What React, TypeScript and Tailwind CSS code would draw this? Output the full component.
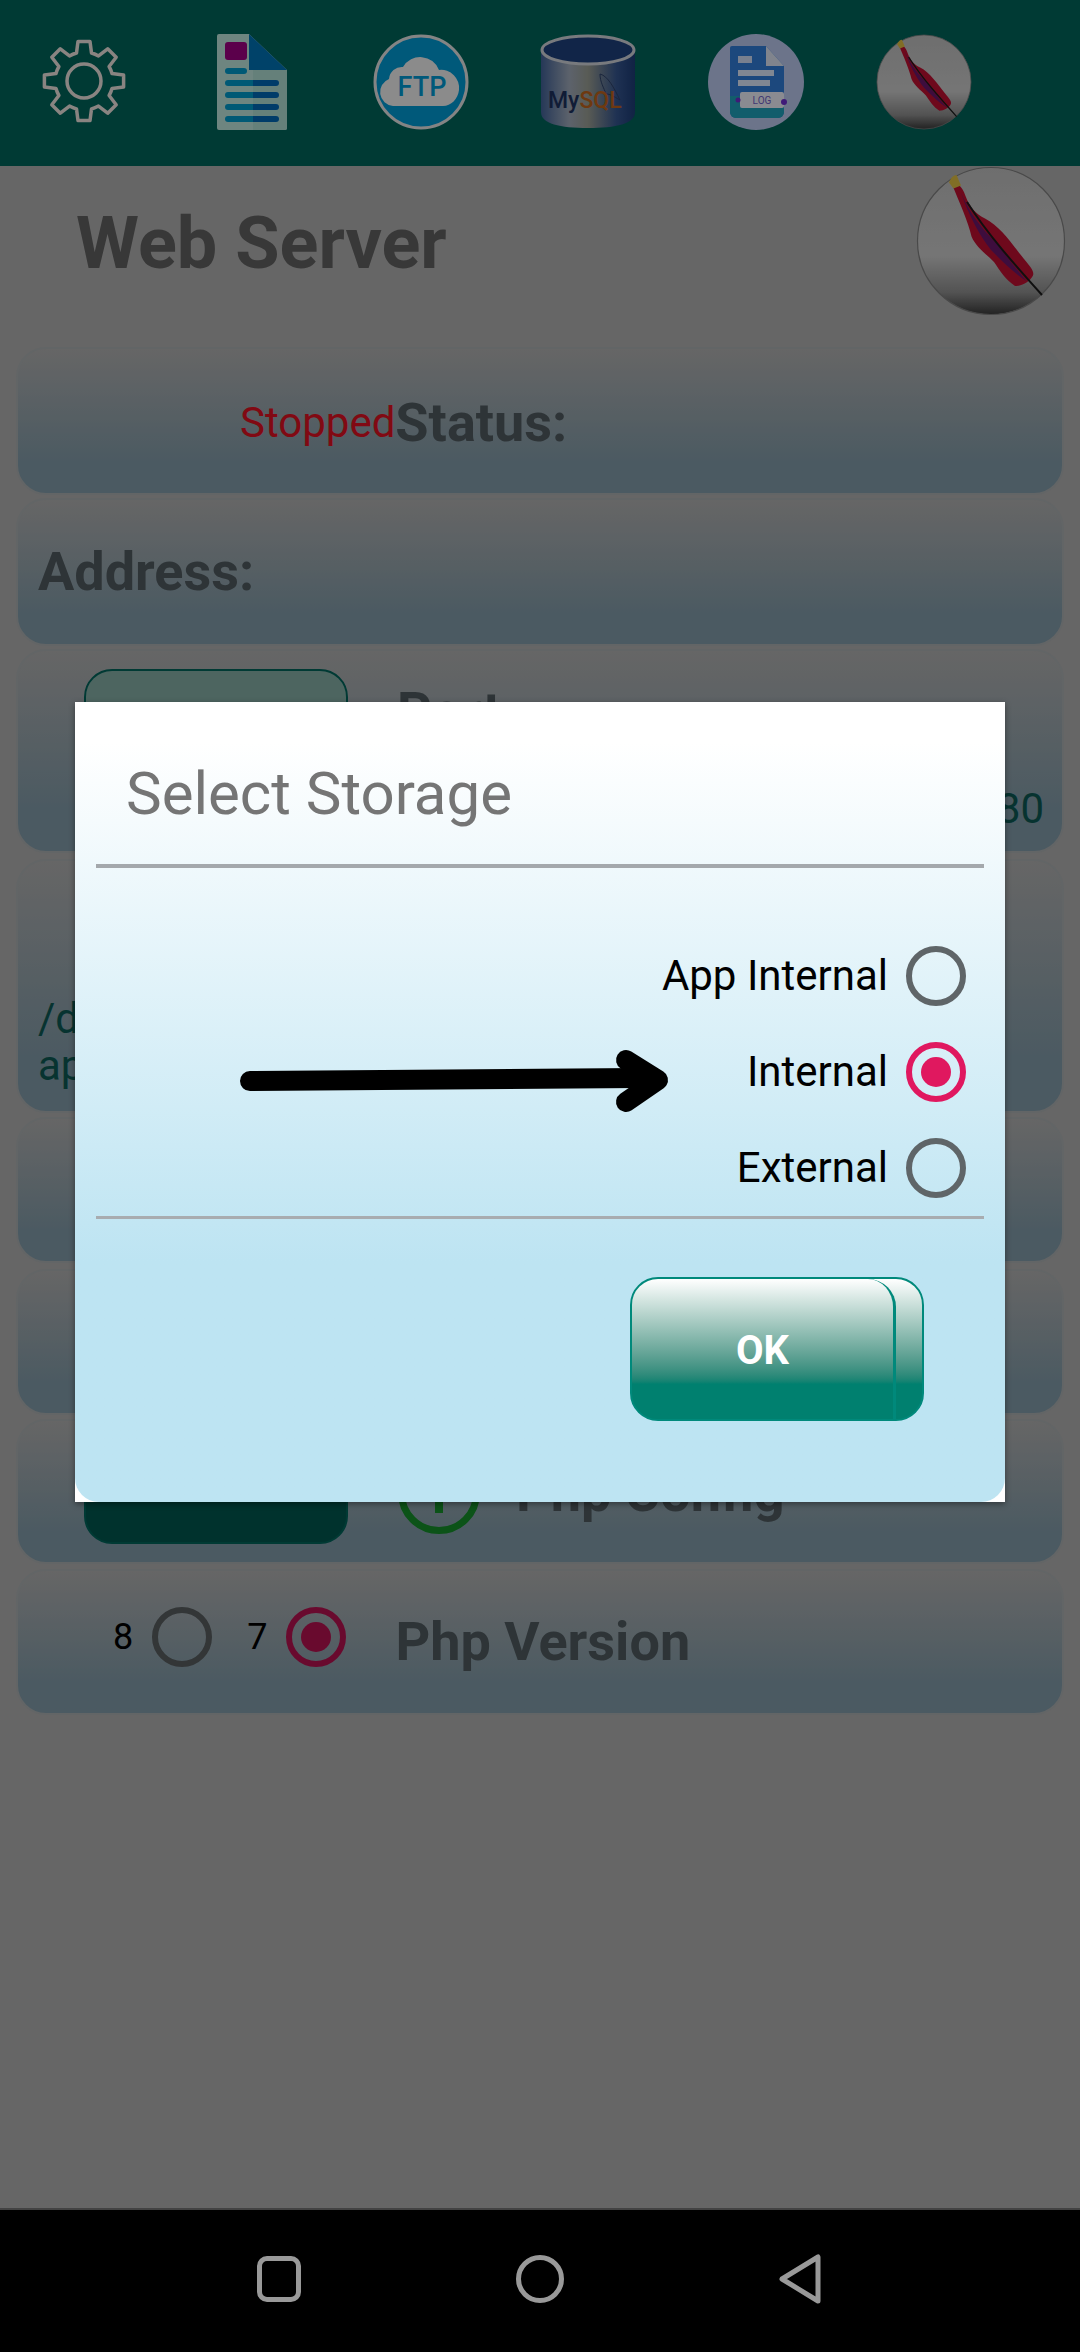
import { useId } from 'react'

// 8 tooth gear outline, centred on 0,0
const gearPath = (() => {
  const teeth = 8
  const tip = 40
  const root = 29
  const pt = (r: number, a: number) => `${(r * Math.cos(a)).toFixed(1)} ${(r * Math.sin(a)).toFixed(1)}`
  let d = ''
  for (let i = 0; i < teeth; i++) {
    const a = (i * 2 * Math.PI) / teeth - Math.PI / 2
    d += `${i === 0 ? 'M' : 'A' + root + ' ' + root + ' 0 0 1'} ${pt(root, a - 0.26)} `
    d += `L${pt(tip, a - 0.15)} L${pt(tip, a + 0.15)} L${pt(root, a + 0.26)} `
  }
  return d + `A${root} ${root} 0 0 1 ${pt(root, -Math.PI / 2 - 0.26)}Z`
})()

function GearIcon() {
  return (
    <svg width="90" height="90" viewBox="-45 -45 90 90" fill="none" stroke="#e4dcd8" strokeWidth="3.5" strokeLinejoin="round">
      <path d={gearPath} />
      <circle r="17" />
    </svg>
  )
}

function DocIcon() {
  return (
    <svg width="70" height="96" viewBox="0 0 70 96">
      <path d="M2 0H32L70 36V94a2 2 0 0 1-2 2H2a2 2 0 0 1-2-2V2a2 2 0 0 1 2-2Z" fill="#b8ded6" />
      <path d="M36 36H70V94a2 2 0 0 1-2 2H36Z" fill="#a8d6cc" />
      <path d="M32 0L70 36H32Z" fill="#006fb0" />
      <rect x="8" y="8" width="22" height="18" rx="3" fill="#98007e" />
      <rect x="8" y="34" width="22" height="6" rx="3" fill="#0094c4" />
      {[46, 58, 70, 82].map((y) => (
        <g key={y}>
          <path d={`M11 ${y}H36V${y + 6}H11a3 3 0 0 1 0-6Z`} fill="#0094c4" />
          <path d={`M36 ${y}H59a3 3 0 0 1 0 6H36Z`} fill="#0064b0" />
        </g>
      ))}
    </svg>
  )
}

function FtpIcon() {
  return (
    <svg width="96" height="96" viewBox="0 0 96 96">
      <circle cx="48" cy="48" r="46" fill="#0094cc" stroke="#dcdcdc" strokeWidth="3" />
      <path
        d="M20 72a14 14 0 0 1-4-27 13 13 0 0 1 14-12 20 20 0 0 1 36 3 18 18 0 0 1 20 20c-1 9-8 16-16 16Z"
        fill="#e8e8e8"
      />
      <text x="49" y="62" textAnchor="middle" fontFamily="Roboto, sans-serif" fontSize="27" fontWeight="500" fill="#0094cc">
        FTP
      </text>
    </svg>
  )
}

function MysqlIcon() {
  const id = useId()
  return (
    <svg width="96" height="96" viewBox="0 0 96 96">
      <defs>
        <linearGradient id={id} x1="0" x2="1" y1="0" y2="0">
          <stop offset="0" stopColor="#3f5e92" />
          <stop offset="0.3" stopColor="#9aa4b4" />
          <stop offset="0.5" stopColor="#94988e" />
          <stop offset="0.8" stopColor="#34538a" />
          <stop offset="1" stopColor="#1c3a72" />
        </linearGradient>
      </defs>
      <path d="M1 16V78C1 90 20 94 48 94S95 90 95 78V16Z" fill={`url(#${id})`} />
      <ellipse cx="48" cy="16" rx="46" ry="14" fill="#1d3f78" stroke="#c8ccd2" strokeWidth="3" />
      <path d="M60 40c8 2 14 14 20 26-7-4-10-6-14-6-2-6-6-12-6-20Z" fill="none" stroke="#2c3f66" strokeWidth="1" />
      <text x="8" y="74" fontFamily="Roboto, sans-serif" fontSize="23" fontWeight="500" fill="#1c2f5a">
        My<tspan fill="#b8601c">SQL</tspan>
      </text>
    </svg>
  )
}

function LogIcon() {
  return (
    <svg width="96" height="96" viewBox="0 0 96 96">
      <circle cx="48" cy="48" r="48" fill="#b4c2e6" />
      <path d="M24 12H58L76 32V78a6 6 0 0 1-6 6H28a6 6 0 0 1-6-6V14a2 2 0 0 1 2-2Z" fill="#2f78d0" />
      <path d="M22 62H76V78a6 6 0 0 1-6 6H28a6 6 0 0 1-6-6Z" fill="#1f9bb4" />
      <path d="M58 12L76 32H58Z" fill="#d6dcec" />
      <rect x="30" y="22" width="14" height="7" fill="#c8d6ee" />
      <rect x="30" y="36" width="36" height="6" fill="#d8e2f4" />
      <rect x="30" y="46" width="32" height="6" fill="#d8e2f4" />
      <rect x="32" y="58" width="44" height="16" rx="2" fill="#e6e8f2" />
      <circle cx="30" cy="66" r="2.5" fill="#6a2cc8" />
      <circle cx="76" cy="68" r="3" fill="#6a2cc8" />
      <text x="54" y="70" textAnchor="middle" fontFamily="Roboto, sans-serif" fontSize="10" fill="#6a5cc0">
        LOG
      </text>
    </svg>
  )
}

function ApacheIcon({ size }: { size: number }) {
  const id = useId()
  return (
    <svg width={size} height={size} viewBox="0 0 100 100">
      <defs>
        <linearGradient id={id} x1="0" x2="0" y1="0" y2="1">
          <stop offset="0" stopColor="#b8b8b8" />
          <stop offset="0.6" stopColor="#c4c4c4" />
          <stop offset="0.85" stopColor="#8a8a8a" />
          <stop offset="1" stopColor="#3a3a3a" />
        </linearGradient>
      </defs>
      <circle cx="50" cy="50" r="49" fill={`url(#${id})`} stroke="#7a7a7a" strokeWidth="0.8" />
      <path d="M23 10C28 11 31 14 33 20C36 28 40 32 46 35C56 40 64 52 72 62C76 67 79 70 78 73C76 77 71 80 66 80C60 76 56 70 52 64C46 58 40 54 37 47C35 38 29 24 23 10Z" fill="#b81030" />
      <path d="M22 11C23 8 25 6 27 6L30 13 25 15Z" fill="#d8b840" />
      <path d="M30 18C36 32 44 42 54 52C60 60 68 70 74 77C66 72 58 64 50 56C42 46 35 32 30 18Z" fill="#4c1a78" opacity="0.75" />
      <path d="M34 24C48 46 66 66 84 86" fill="none" stroke="#1a1a1a" strokeWidth="1.3" />
    </svg>
  )
}

function Radio({ checked, dark }: { checked?: boolean; dark?: boolean }) {
  if (checked) {
    const color = dark ? 'border-[#b0114e]' : 'border-[#e0185f]'
    const dot = dark ? 'bg-[#b0114e]' : 'bg-[#e0185f]'
    return (
      <span className={`flex h-[60px] w-[60px] items-center justify-center rounded-full border-[6px] ${color}`}>
        <span className={`h-[30px] w-[30px] rounded-full ${dot}`} />
      </span>
    )
  }
  return <span className={`h-[60px] w-[60px] rounded-full border-[6px] ${dark ? 'border-[#555a5c]' : 'border-[#5f6568]'}`} />
}

function StorageOption({ label, checked }: { label: string; checked?: boolean }) {
  return (
    <div className="flex h-[96px] items-center justify-end gap-[18px] pr-[18px]">
      <span className="text-[42px] leading-none text-black">{label}</span>
      <Radio checked={checked} />
    </div>
  )
}

const cardClass =
  'mx-4 rounded-[30px] border-2 border-[#a4a8aa] bg-gradient-to-b from-[#aaaaaa] to-[#7d96a3] to-80%'
const labelClass = 'text-[54px] font-bold leading-none text-[#4e585d]'
const keyClass = 'w-[264px] rounded-[28px] border-2 border-[#006158]'

export default function App() {
  return (
    <div className="relative flex h-[2352px] w-[1080px] flex-col overflow-hidden bg-[#aaaaaa] font-[Roboto,sans-serif]">
      <div className="flex h-[166px] items-start bg-[#006158] pt-[34px]">
        <div className="ml-[39px] mt-[2px] w-[90px]">
          <GearIcon />
        </div>
        <div className="ml-[88px]">
          <DocIcon />
        </div>
        <div className="ml-[86px]">
          <FtpIcon />
        </div>
        <div className="ml-[71px]">
          <MysqlIcon />
        </div>
        <div className="ml-[72px]">
          <LogIcon />
        </div>
        <div className="ml-[72px]">
          <ApacheIcon size={96} />
        </div>
      </div>

      <div className="flex h-[181px] items-start justify-between pl-[76px] pr-[14px]">
        <h1 className="mt-[30px] text-[72px] font-bold leading-[96px] text-[#5e5e5e]">Web Server</h1>
        <ApacheIcon size={150} />
      </div>

      <div className={`${cardClass} flex h-[148px] items-center pl-[222px] pt-1`}>
        <span className="text-[42px] leading-none text-[#d81020]">Stopped</span>
        <span className={labelClass}>Status:</span>
      </div>

      <div className={`${cardClass} mt-[3px] flex h-[148px] items-center pl-[20px]`}>
        <span className={labelClass}>Address:</span>
      </div>

      <div className={`${cardClass} mt-[3px] flex h-[204px] justify-between pl-[66px] pr-[18px] pt-[18px]`}>
        <div className="flex items-start gap-[49px]">
          <div className={`${keyClass} h-[130px] bg-[#80a8a0]`} />
          <span className={`${labelClass} mt-[16px]`}>Port</span>
        </div>
        <span className="mt-[119px] text-[42px] leading-none text-[#0c5650]">80</span>
      </div>

      <div className={`${cardClass} mt-[6px] h-[254px] pl-[20px] pt-[134px] text-[42px] leading-[47px] text-[#0c5650]`}>
        <div>/d</div>
        <div>ap</div>
      </div>

      <div className={`${cardClass} mt-1 h-[146px]`} />
      <div className={`${cardClass} mt-[6px] h-[146px]`} />

      <div className={`${cardClass} mt-[4px] flex h-[145px] items-end gap-[50px] pb-[18px] pl-[66px]`}>
        <div className={`${keyClass} h-[120px] bg-[#00544c]`} />
        <div className="flex items-center gap-9 pb-[10px]">
          <span className="flex h-[82px] w-[82px] justify-center rounded-full border-[7px] border-[#148a28]">
            <span className="mt-[14px] h-[40px] w-[8px] bg-[#148a28]" />
          </span>
          <span className={labelClass}>Php Config</span>
        </div>
      </div>

      <div className={`${cardClass} mt-[5px] flex h-[146px] items-center pl-[95px]`}>
        <div className="flex items-center gap-[19px] pb-[10px]">
          <span className="text-[36px] leading-none text-black">8</span>
          <Radio dark />
        </div>
        <div className="ml-[35px] flex items-center gap-[19px] pb-[10px]">
          <span className="text-[36px] leading-none text-black">7</span>
          <Radio checked dark />
        </div>
        <span className={`${labelClass} ml-[49px]`}>Php Version</span>
      </div>

      <div className="mt-auto flex h-[144px] items-center border-t-2 border-[#707070] bg-black pb-[4px]">
        <span className="ml-[257px] h-[46px] w-[44px] rounded-[10px] border-[5px] border-white" />
        <span className="ml-[215px] h-[48px] w-[48px] rounded-full border-[5px] border-white" />
        <svg className="ml-[215px]" width="42" height="50" viewBox="0 0 42 50" fill="none" stroke="#ffffff" strokeWidth="5" strokeLinejoin="round">
          <path d="M39 3V47L3 25Z" />
        </svg>
      </div>

      {/* dim behind the dialog */}
      <div className="absolute inset-0 z-10 bg-black/40" />

      <div className="absolute left-[75px] top-[702px] z-20 h-[800px] w-[930px] bg-white shadow-[0_2px_6px_rgba(0,0,0,0.4)]">
        <div className="flex h-full flex-col rounded-[24px] bg-gradient-to-b from-white from-5% to-[#bde4f2] to-70% px-[21px]">
          <div className="flex h-[166px] shrink-0 items-center border-b-[4px] border-[#a4a8ac] pl-[30px] pt-[22px]">
            <h2 className="text-[60px] font-normal leading-none text-[#757575]">Select Storage</h2>
          </div>
          <div className="flex h-[351px] shrink-0 flex-col justify-end border-b-[3px] border-[#a8acb0]">
            <StorageOption label="App Internal" />
            <StorageOption label="Internal" checked />
            <StorageOption label="External" />
          </div>
          <div className="flex justify-end pr-[60px] pt-[58px]">
            <button className="h-[144px] w-[294px] rounded-[28px] border-2 border-[#00897b] bg-gradient-to-b from-white to-[#00806f] to-75%">
              <span className="flex h-full w-[264px] items-center justify-center rounded-tr-[28px] border-r-[3px] border-[#00897b] pt-[4px] text-[40px] font-bold text-white">
                OK
              </span>
            </button>
          </div>
        </div>
        {/* hand drawn arrow on top of the dialog */}
        <svg className="absolute left-[163px] top-[340px]" width="440" height="80" viewBox="0 0 440 80" fill="none" stroke="#000000" strokeLinecap="round" strokeLinejoin="round">
          <path d="M12 39L400 36" strokeWidth="20" />
          <path d="M388 18L420 38 388 60" strokeWidth="20" />
        </svg>
      </div>
    </div>
  )
}
